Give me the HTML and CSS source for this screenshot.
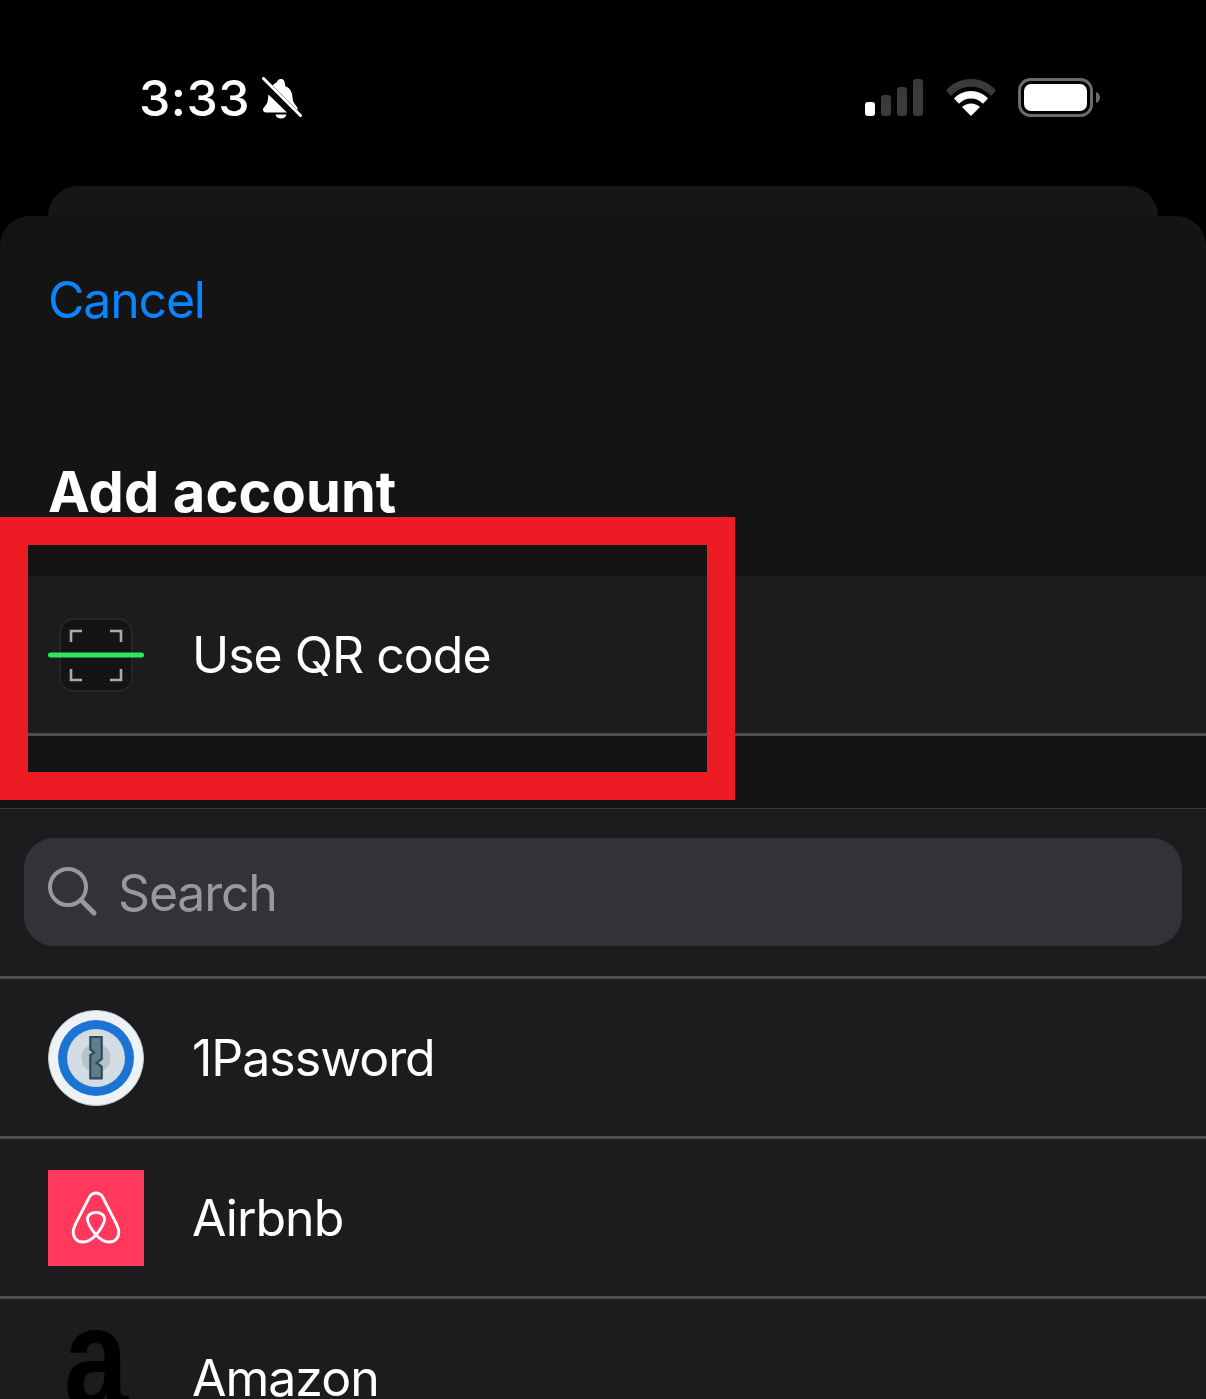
FILE: index.html
```html
<!DOCTYPE html>
<html lang="en">
<head>
    <meta charset="UTF-8">
    <meta name="viewport" content="width=device-width, initial-scale=1.0">
    <title>Add account</title>
    <link rel="stylesheet" href="styles.css">
</head>
<body>

<div class="status-bar">
    <div class="status-left">
        <span class="time">3:33</span>
        <svg class="bell" width="42" height="42" viewBox="0 0 42 42">
            <path d="M21 2c-2.300 0-4 1.600-4.300 3.600-1.700.6-3 1.600-4.100 2.900l24.600 24.700c.3-.4.400-.9.400-1.400 0-2.400-3.400-4.300-4.300-7.300-.8-2.600-.8-5.600-1.500-8.300-1-3.800-3.300-6-6.500-7C25 3.600 23.300 2 21 2z" fill="#fff"/>
            <path d="M8.500 17.500 27 35.500H6.500C4.300 35.500 3 34.300 3 32.800c0-2.300 3.200-4.300 4.200-7 .8-2.400.9-5.600 1.300-8.300z" fill="#fff"/>
            <path d="M15.500 37.500h11C26 40 23.800 41.500 21 41.500s-5-1.500-5.500-4z" fill="#fff"/>
            <path d="M3 3l36 36" stroke="#000" stroke-width="6"/>
            <path d="M3.500 1.500l37 37" stroke="#fff" stroke-width="3" stroke-linecap="round"/>
        </svg>
    </div>
    <div class="status-right">
        <svg class="signal" width="58" height="38" viewBox="0 0 58 38">
            <rect x="0" y="23" width="10" height="14" rx="3" fill="#fff"/>
            <rect x="16" y="16" width="10" height="21" rx="3" fill="#3a3a3a"/>
            <rect x="32" y="8" width="10" height="29" rx="3" fill="#3a3a3a"/>
            <rect x="48" y="0" width="10" height="37" rx="3" fill="#3a3a3a"/>
        </svg>
        <svg class="wifi" width="52" height="38" viewBox="0 0 52 38">
            <path d="M1 12.500C7.500 5 16 1 26 1s18.500 4 25 11.500l-5 5.500C40.500 12 33.500 8.800 26 8.800S11.500 12 6 18z" fill="#3a3a3a"/>
            <path d="M9 20.500C13.500 15.800 19.500 13 26 13s12.500 2.800 17 7.500l-5 5.200C34.500 22.200 30.500 20.500 26 20.500s-8.500 1.700-12 5.200z" fill="#fff"/>
            <path d="M17 29c2.500-2.200 5.500-3.500 9-3.500s6.500 1.300 9 3.500l-9 9z" fill="#fff"/>
        </svg>
        <svg width="82" height="40" viewBox="0 0 82 40">
            <rect x="1.500" y="1.500" width="72" height="36" rx="11" fill="none" stroke="#6b6b6b" stroke-width="3"/>
            <rect x="6" y="6" width="63" height="27" rx="7" fill="#fff"/>
            <path d="M78 14c2.500.8 4 3 4 5.500S80.500 24.200 78 25z" fill="#6b6b6b"/>
        </svg>
    </div>
</div>

<div class="sheet-back"></div>

<div class="sheet">
    <div class="nav"><a class="cancel">Cancel</a></div>
    <h1 class="title">Add account</h1>

    <div class="row">
        <svg class="icon" width="96" height="96" viewBox="0 0 96 96">
            <rect x="12" y="12" width="72" height="72" rx="14" fill="#141414" stroke="#262628" stroke-width="2"/>
            <path d="M23 35V24h11M62 24h11v11M23 62v11h11M73 62v11H62" fill="none" stroke="#aaa" stroke-width="2.600"/>
            <rect x="0" y="45.500" width="96" height="5" rx="2.500" fill="#2fe860"/>
        </svg>
        <span class="label">Use QR code</span>
    </div>

    <div class="gap"></div>

    <div class="search-wrap">
        <div class="search">
            <svg width="52" height="52" viewBox="0 0 52 52">
                <circle cx="20" cy="21" r="18" fill="none" stroke="#98989f" stroke-width="4"/>
                <path d="M33 34l13 13" stroke="#98989f" stroke-width="5" stroke-linecap="round"/>
            </svg>
            <span class="placeholder">Search</span>
        </div>
    </div>

    <div class="row">
        <svg class="icon" width="96" height="96" viewBox="0 0 96 96">
            <circle cx="48" cy="48" r="47.500" fill="#eef2f5" stroke="#c3c8cb"/>
            <circle cx="48" cy="48" r="38" fill="#1b74d3"/>
            <circle cx="48" cy="48" r="29" fill="#d3dce2"/>
            <circle cx="48" cy="48" r="14.500" fill="#b6c4ca"/>
            <path d="M42.300 27H53.700V49L48.700 53 53.700 56.500V68.300H42.300V45L46 42.500 42.300 39.500z" fill="#5f7d8c" stroke="#2f4a58" stroke-width="2.200"/>
        </svg>
        <span class="label">1Password</span>
    </div>

    <div class="row">
        <svg class="icon" width="96" height="96" viewBox="0 0 96 96">
            <rect width="96" height="96" fill="#ff385c"/>
            <path transform="translate(2.400 0) scale(.95 1)" d="M48 65C42 58 39 53 39 49c0-4 4-6.500 9-6.500s9 2.500 9 6.500c0 4-3 9-9 16-5 5-10 7-14 7-6 0-10-4-10-10 0-3 1-5 3-9l14-26c2-3 4-4 7-4s5 1 7 4l14 26c2 4 3 6 3 9 0 6-4 10-10 10-4 0-9-2-14-7z" fill="none" stroke="#fff" stroke-width="3"/>
        </svg>
        <span class="label">Airbnb</span>
    </div>

    <div class="row">
        <div class="icon amazon">a</div>
        <span class="label">Amazon</span>
    </div>
</div>

<div class="highlight"></div>

</body>
</html>
```

FILE: styles.css
```css
html, body {
    height: 1399px;
    overflow: hidden;
}
body {
    font-family: Inter, "Noto Sans", sans-serif;
    background-color: #000;
    color: #fff;
    margin: 0;
    padding: 0;
    position: relative;
}

/* status bar */
.status-bar {
    height: 186px;
    display: flex;
    justify-content: space-between;
    align-items: flex-start;
    padding: 0 106px 0 139px;
}
.status-left {
    display: flex;
    align-items: center;
    gap: 10px;
    margin-top: 70px;
}
.time {
    font-size: 50px;
    font-weight: 550;
    line-height: 56px;
    letter-spacing: 0.5px;
}
.status-right {
    display: flex;
    align-items: flex-start;
    margin-top: 78px;
}
.signal {
    margin: 1px 22px 0 0;
}
.wifi {
    margin-right: 21px;
}

/* sheets */
.sheet-back {
    height: 30px;
    margin: 0 48px;
    background-color: #161616;
    border-radius: 30px 30px 0 0;
}
.sheet {
    background-color: #141414;
    border-radius: 30px 30px 0 0;
    height: 1183px;
}
.nav {
    height: 170px;
    padding: 49px 0 0 48px;
    box-sizing: border-box;
}
.cancel {
    color: #0a84ff;
    font-size: 50px;
    line-height: 70px;
    letter-spacing: -1.2px;
}
.title {
    margin: 0;
    padding: 70px 0 0 48px;
    height: 190px;
    box-sizing: border-box;
    font-size: 56px;
    line-height: 72px;
    font-weight: 650;
    letter-spacing: 0.1px;
}

/* rows */
.row {
    display: flex;
    align-items: center;
    gap: 48px;
    height: 160px;
    padding-left: 48px;
    background-color: #1c1c1e;
    border-bottom: 3px solid #4f4f52;
    box-sizing: border-box;
}
.icon {
    flex-shrink: 0;
}
.label {
    font-size: 50px;
    letter-spacing: -1px;
}
.amazon {
    width: 96px;
    height: 96px;
    margin-bottom: 40px;
    display: flex;
    justify-content: center;
    align-items: center;
    color: #000;
    font-family: "Liberation Sans", sans-serif;
    font-weight: 700;
    font-size: 115px;
    line-height: 96px;
    transform: scaleY(1.26);
}
.gap {
    height: 72px;
    border-bottom: 1px solid #38383a;
}

/* search */
.search-wrap {
    background-color: #1c1c1e;
    height: 170px;
    padding: 29px 24px 0;
    box-sizing: border-box;
    border-bottom: 3px solid #4f4f52;
}
.search {
    height: 108px;
    background-color: #323237;
    border-radius: 30px;
    display: flex;
    align-items: center;
    gap: 18px;
    padding-left: 24px;
}
.placeholder {
    color: #98989f;
    font-size: 50px;
    letter-spacing: -1.2px;
    padding-top: 2px;
}

/* annotation drawn over the screenshot */
.highlight {
    position: absolute;
    left: 0;
    top: 517px;
    width: 735px;
    height: 283px;
    border: 28px solid #ed1c24;
    box-sizing: border-box;
}
```
